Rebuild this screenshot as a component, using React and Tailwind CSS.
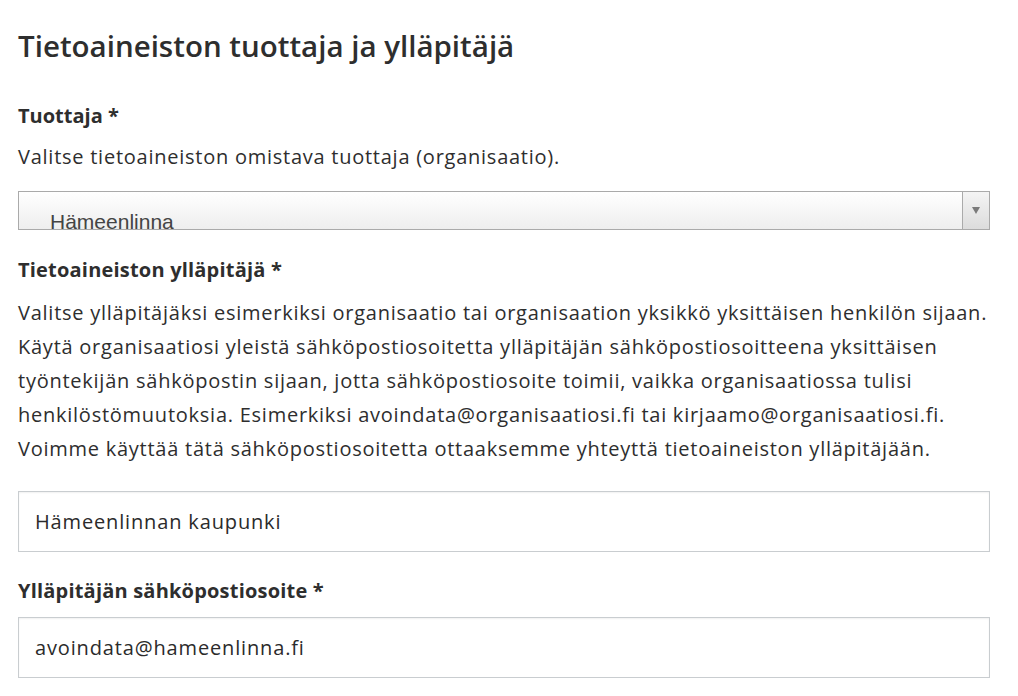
import React from 'react';

const paragraph = [
  'Valitse ylläpitäjäksi esimerkiksi organisaatio tai organisaation yksikkö yksittäisen henkilön sijaan.',
  'Käytä organisaatiosi yleistä sähköpostiosoitetta ylläpitäjän sähköpostiosoitteena yksittäisen',
  'työntekijän sähköpostin sijaan, jotta sähköpostiosoite toimii, vaikka organisaatiossa tulisi',
  'henkilöstömuutoksia. Esimerkiksi avoindata@organisaatiosi.fi tai kirjaamo@organisaatiosi.fi.',
  'Voimme käyttää tätä sähköpostiosoitetta ottaaksemme yhteyttä tietoaineiston ylläpitäjään.',
];

const TextInput = ({ value }) => (
  <input
    readOnly
    value={value}
    className="block w-full h-[61px] border border-[#c9cdd0] bg-white px-4 text-[20px] tracking-[0.85px] text-[#2b2b2b] shadow-[inset_0_1px_2px_rgba(0,0,0,0.06)] outline-none"
  />
);

const App = () => {
  return (
    <div className="min-h-[696px] bg-white pl-[18px] pr-[28px] pt-[24px] font-['Open_Sans',sans-serif] text-[#2e2e2e]">
      <h1 className="text-[29.5px] font-semibold leading-[44px]">Tietoaineiston tuottaja ja ylläpitäjä</h1>

      <label className="block mt-[33px] text-[20px] font-bold leading-[30px]">Tuottaja *</label>
      <p className="mt-[11px] text-[20px] leading-[30px] tracking-[0.75px]">Valitse tietoaineiston omistava tuottaja (organisaatio).</p>

      <div className="mt-[19px] flex h-[39px] border border-[#aaaaaa] bg-gradient-to-b from-white to-[#eeeeee] overflow-hidden">
        <div className="flex-1 flex items-end pl-[31px] font-['Liberation_Sans',Arial,sans-serif] text-[21px] leading-none text-[#444] -mb-[3px]">
          Hämeenlinna
        </div>
        <div className="w-[27px] border-l border-[#aaaaaa] bg-gradient-to-b from-[#f4f4f4] to-[#dcdcdc] flex items-start justify-center pt-[15px]">
          <span className="block w-0 h-0 border-l-[4px] border-r-[4px] border-t-[7px] border-l-transparent border-r-transparent border-t-[#7a7a7a]" />
        </div>
      </div>

      <label className="block mt-[25px] text-[20px] font-bold leading-[30px] tracking-[0.2px]">Tietoaineiston ylläpitäjä *</label>
      <div className="mt-[11px] text-[20px] leading-[34px] tracking-[0.75px]">
        {paragraph.map((line) => (
          <div key={line} className="whitespace-nowrap">{line}</div>
        ))}
      </div>

      <div className="mt-[25px]">
        <TextInput value="Hämeenlinnan kaupunki" />
      </div>

      <label className="block mt-[24px] text-[20px] font-bold leading-[30px] tracking-[0.2px]">Ylläpitäjän sähköpostiosoite *</label>
      <div className="mt-[11px]">
        <TextInput value="avoindata@hameenlinna.fi" />
      </div>
    </div>
  );
};

export default App;
